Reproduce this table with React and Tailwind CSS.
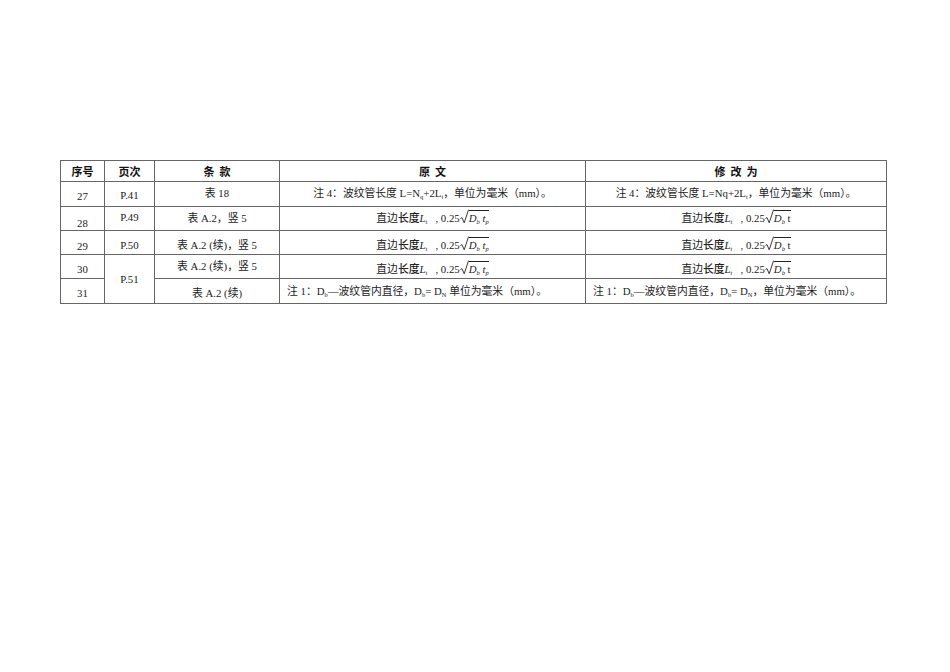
const serif = { fontFamily: '"Liberation Serif", "Noto Sans CJK SC", serif' };

function Radical() {
  return (
    <svg width="9" height="15" viewBox="0 0 9 15" className="shrink-0">
      <path d="M0.5 9.5 L2 8.6 L4.2 13.8 L8.6 0.6" fill="none" stroke="#222" strokeWidth="0.9" />
    </svg>
  );
}

function Sub({ children, italic }) {
  return (
    <sub className={`text-[6.5px] align-baseline relative top-[2px] ${italic ? "italic" : ""}`}>
      {children}
    </sub>
  );
}

function SqrtCell({ fixed }) {
  return (
    <span className="inline-flex items-end">
      <span className="leading-[12px]">
        直边
        <span className="font-medium" style={{ fontFamily: '"Noto Sans CJK SC", sans-serif' }}>
          长度
        </span>
        <span className="italic">L</span>
        <Sub>t</Sub>
        <span className="whitespace-pre">{"   , 0.25"}</span>
      </span>
      <Radical />
      <span className="border-t border-[#222] pt-[1px] leading-[12px] whitespace-pre">
        <span className="italic">D</span>
        <Sub italic>b</Sub>
        {fixed ? (
          <span>{" t"}</span>
        ) : (
          <>
            <span className="italic">{" t"}</span>
            <Sub italic>p</Sub>
          </>
        )}
      </span>
    </span>
  );
}

export default function App() {
  const th = "border border-[#666] font-bold text-[11px] text-[#111] align-middle text-center";
  const td = "border border-[#666] align-top text-center";

  return (
    <div className="w-[950px] h-[672px] bg-white pt-[160px] pl-[60px]" style={serif}>
      <table className="table-fixed border-collapse w-[826px] text-[10.8px] leading-[12px] text-[#222]">
        <colgroup>
          <col className="w-[44px]" />
          <col className="w-[50px]" />
          <col className="w-[125px]" />
          <col className="w-[306px]" />
          <col className="w-[301px]" />
        </colgroup>
        <thead style={{ fontFamily: '"Noto Sans CJK SC", sans-serif' }}>
          <tr className="h-[21px]">
            <th className={th}>序号</th>
            <th className={th}>页次</th>
            <th className={th}>条&nbsp;&nbsp;款</th>
            <th className={th}>原&nbsp;&nbsp;文</th>
            <th className={th}>修&nbsp;&nbsp;改&nbsp;&nbsp;为</th>
          </tr>
        </thead>
        <tbody>
          <tr className="h-[25px]">
            <td className={`${td} pt-[8px]`}>27</td>
            <td className={`${td} pt-[7px]`}>P.41</td>
            <td className={`${td} pt-[5px]`}>表 18</td>
            <td className={`${td} pt-[5px]`}>
              注 4：波纹管长度 L=N<Sub>q</Sub>+2L<Sub>t</Sub>，单位为毫米（mm）。
            </td>
            <td className={`${td} pt-[5px]`}>
              注 4：波纹管长度 L=Nq+2L<Sub>t</Sub>，单位为毫米（mm）。
            </td>
          </tr>
          <tr className="h-[24px]">
            <td className={`${td} pt-[10px]`}>28</td>
            <td className={`${td} pt-[4px]`}>P.49</td>
            <td className={`${td} pt-[5px]`}>表 A.2，竖 5</td>
            <td className={`${td} pt-[2px]`}>
              <SqrtCell />
            </td>
            <td className={`${td} pt-[2px]`}>
              <SqrtCell fixed />
            </td>
          </tr>
          <tr className="h-[24px]">
            <td className={`${td} pt-[9px]`}>29</td>
            <td className={`${td} pt-[8px]`}>P.50</td>
            <td className={`${td} pt-[8px]`}>表 A.2 (续)，竖 5</td>
            <td className={`${td} pt-[5px]`}>
              <SqrtCell />
            </td>
            <td className={`${td} pt-[5px]`}>
              <SqrtCell fixed />
            </td>
          </tr>
          <tr className="h-[24px]">
            <td className={`${td} pt-[8px]`}>30</td>
            <td className={`${td} pt-[18px]`} rowSpan={2}>
              P.51
            </td>
            <td className={`${td} pt-[5px]`}>表 A.2 (续)，竖 5</td>
            <td className={`${td} pt-[5px]`}>
              <SqrtCell />
            </td>
            <td className={`${td} pt-[5px]`}>
              <SqrtCell fixed />
            </td>
          </tr>
          <tr className="h-[25px]">
            <td className={`${td} pt-[8px]`}>31</td>
            <td className={`${td} pt-[8px]`}>表 A.2 (续)</td>
            <td className={`${td} pt-[6px] text-left pl-[7px]`}>
              注 1：D<Sub>b</Sub>—波纹管内直径，D<Sub>b</Sub>= D<Sub>N</Sub> 单位为毫米（mm）。
            </td>
            <td className={`${td} pt-[6px] text-left pl-[7px]`}>
              注 1：D<Sub>b</Sub>—波纹管内直径，D<Sub>b</Sub>= D<Sub>N</Sub>，单位为毫米（mm）。
            </td>
          </tr>
        </tbody>
      </table>
    </div>
  );
}
